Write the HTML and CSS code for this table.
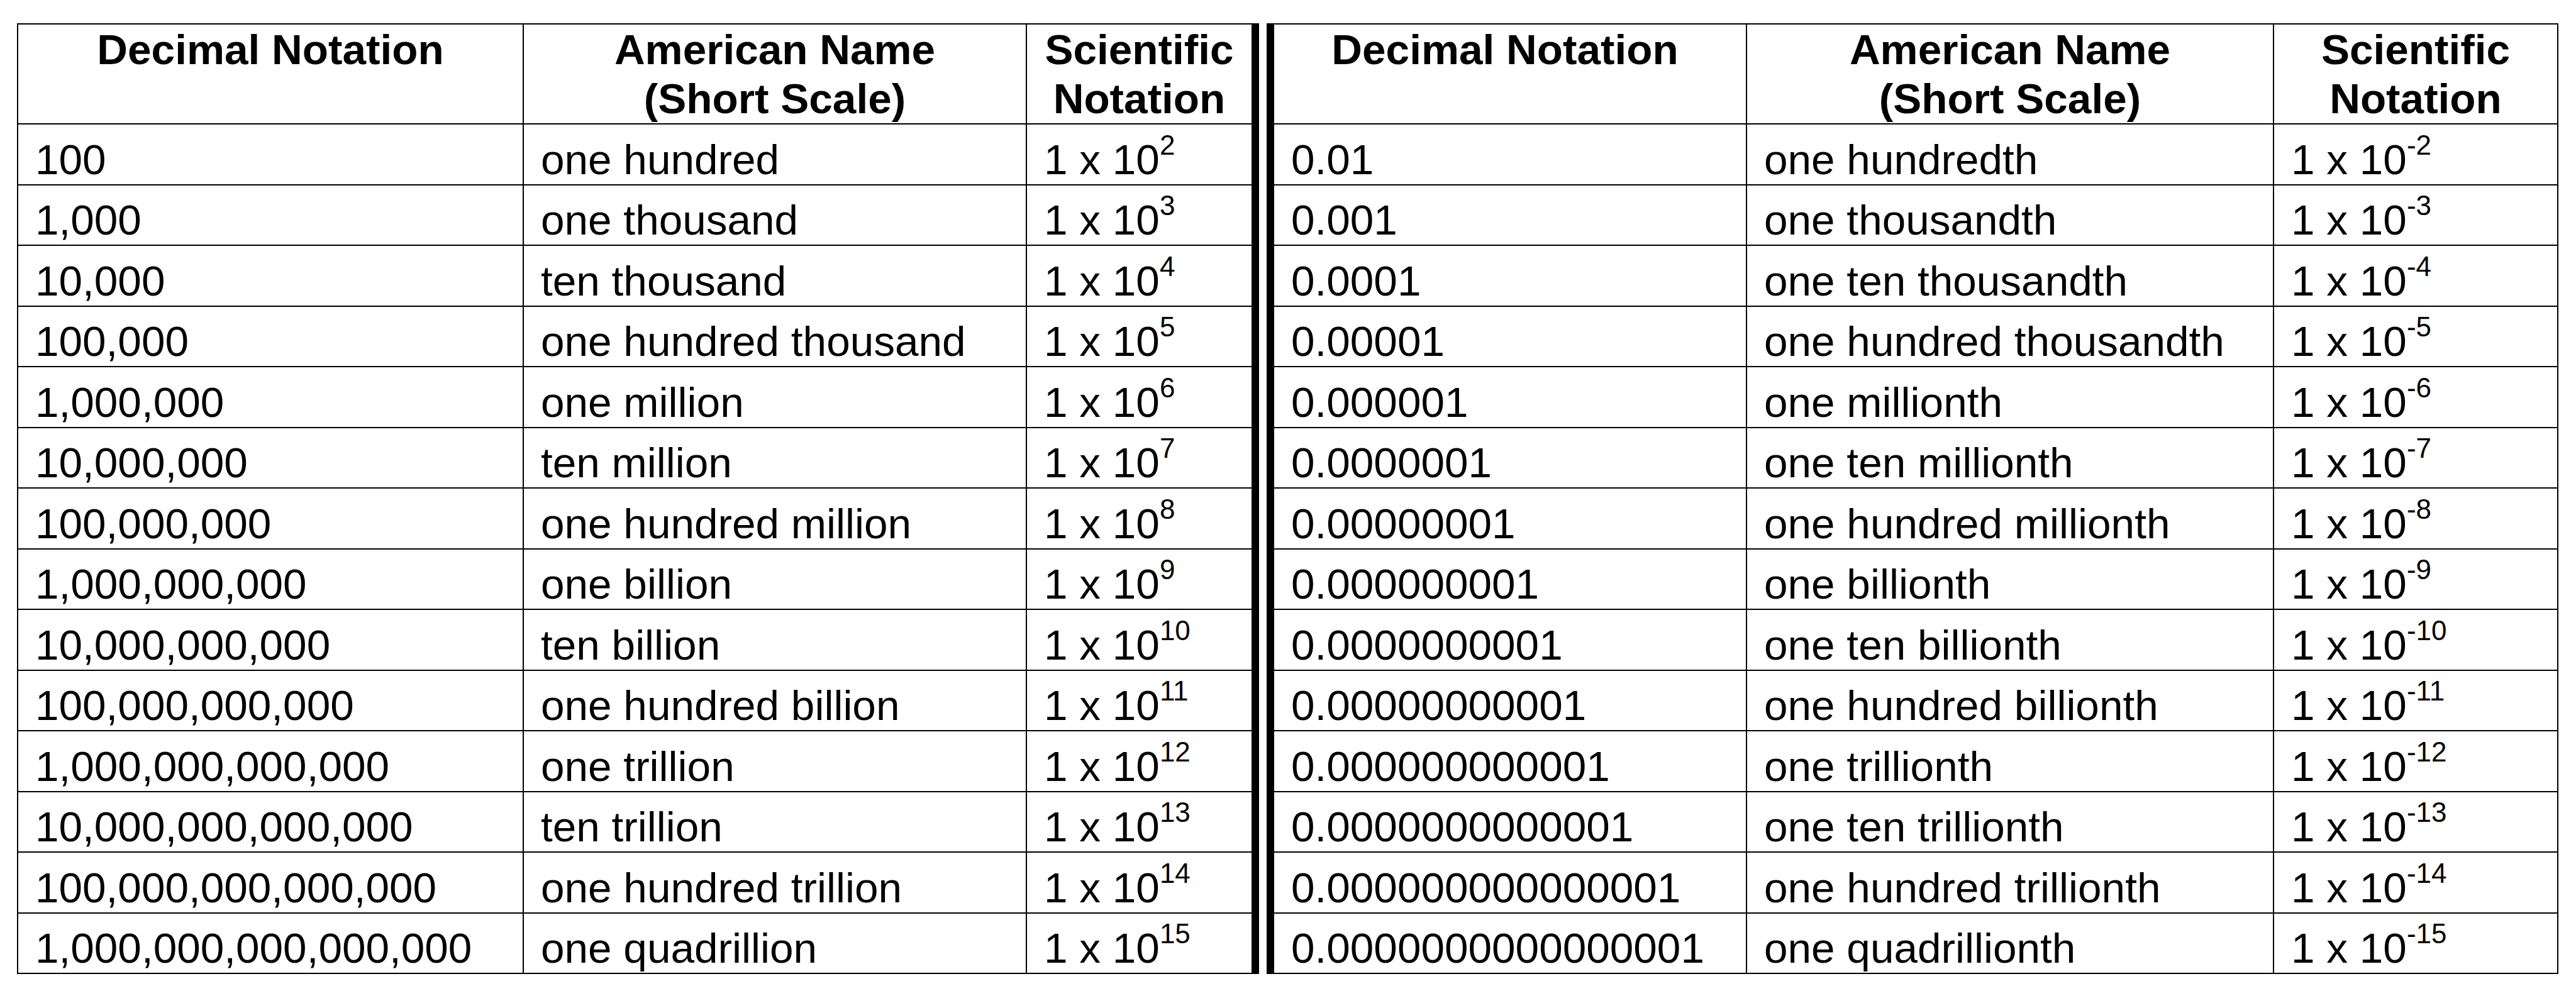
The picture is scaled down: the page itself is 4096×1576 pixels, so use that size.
FILE: index.html
```html
<!DOCTYPE html>
<html lang="en">
<head>
<meta charset="utf-8">
<title>Decimal, American Name and Scientific Notation</title>
<link rel="stylesheet" href="styles.css">
</head>
<body>
<main class="page">
<table class="notation">
  <colgroup>
    <col class="c-dec">
    <col class="c-name">
    <col class="c-sci">
    <col class="c-dec2">
    <col class="c-name2">
    <col class="c-sci2">
  </colgroup>
  <thead>
    <tr class="head-row">
      <th>Decimal Notation</th>
      <th>American Name<br>(Short Scale)</th>
      <th class="split">Scientific<br>Notation</th>
      <th class="after-split">Decimal Notation</th>
      <th>American Name<br>(Short Scale)</th>
      <th>Scientific<br>Notation</th>
    </tr>
  </thead>
  <tbody>
    <tr><td>100</td><td>one hundred</td><td class="split">1 x 10<sup class="exp">2</sup></td><td>0.01</td><td>one hundredth</td><td>1 x 10<sup class="exp">-2</sup></td></tr>
    <tr><td>1,000</td><td>one thousand</td><td class="split">1 x 10<sup class="exp">3</sup></td><td>0.001</td><td>one thousandth</td><td>1 x 10<sup class="exp">-3</sup></td></tr>
    <tr><td>10,000</td><td>ten thousand</td><td class="split">1 x 10<sup class="exp">4</sup></td><td>0.0001</td><td>one ten thousandth</td><td>1 x 10<sup class="exp">-4</sup></td></tr>
    <tr><td>100,000</td><td>one hundred thousand</td><td class="split">1 x 10<sup class="exp">5</sup></td><td>0.00001</td><td>one hundred thousandth</td><td>1 x 10<sup class="exp">-5</sup></td></tr>
    <tr><td>1,000,000</td><td>one million</td><td class="split">1 x 10<sup class="exp">6</sup></td><td>0.000001</td><td>one millionth</td><td>1 x 10<sup class="exp">-6</sup></td></tr>
    <tr><td>10,000,000</td><td>ten million</td><td class="split">1 x 10<sup class="exp">7</sup></td><td>0.0000001</td><td>one ten millionth</td><td>1 x 10<sup class="exp">-7</sup></td></tr>
    <tr><td>100,000,000</td><td>one hundred million</td><td class="split">1 x 10<sup class="exp">8</sup></td><td>0.00000001</td><td>one hundred millionth</td><td>1 x 10<sup class="exp">-8</sup></td></tr>
    <tr><td>1,000,000,000</td><td>one billion</td><td class="split">1 x 10<sup class="exp">9</sup></td><td>0.000000001</td><td>one billionth</td><td>1 x 10<sup class="exp">-9</sup></td></tr>
    <tr><td>10,000,000,000</td><td>ten billion</td><td class="split">1 x 10<sup class="exp">10</sup></td><td>0.0000000001</td><td>one ten billionth</td><td>1 x 10<sup class="exp">-10</sup></td></tr>
    <tr><td>100,000,000,000</td><td>one hundred billion</td><td class="split">1 x 10<sup class="exp">11</sup></td><td>0.00000000001</td><td>one hundred billionth</td><td>1 x 10<sup class="exp">-11</sup></td></tr>
    <tr><td>1,000,000,000,000</td><td>one trillion</td><td class="split">1 x 10<sup class="exp">12</sup></td><td>0.000000000001</td><td>one trillionth</td><td>1 x 10<sup class="exp">-12</sup></td></tr>
    <tr><td>10,000,000,000,000</td><td>ten trillion</td><td class="split">1 x 10<sup class="exp">13</sup></td><td>0.0000000000001</td><td>one ten trillionth</td><td>1 x 10<sup class="exp">-13</sup></td></tr>
    <tr><td>100,000,000,000,000</td><td>one hundred trillion</td><td class="split">1 x 10<sup class="exp">14</sup></td><td>0.000000000000001</td><td>one hundred trillionth</td><td>1 x 10<sup class="exp">-14</sup></td></tr>
    <tr><td>1,000,000,000,000,000</td><td>one quadrillion</td><td class="split">1 x 10<sup class="exp">15</sup></td><td>0.0000000000000001</td><td>one quadrillionth</td><td>1 x 10<sup class="exp">-15</sup></td></tr>
  </tbody>
</table>
</main>
</body>
</html>
```

FILE: styles.css
```css
html, body {
  margin: 0;
  padding: 0;
  background: #ffffff;
}

body {
  font-family: "Liberation Sans", Arial, sans-serif;
  color: #000000;
}

.page {
  padding: 37px 0 0 27px;
}

.notation {
  border-collapse: collapse;
  table-layout: fixed;
  width: 4039px;
  font-size: 67.5px;
  line-height: 78px;
}

.c-dec { width: 804px; }
.c-name { width: 800px; }
.c-sci { width: 376px; }
.c-dec2 { width: 769px; }
.c-name2 { width: 838px; }
.c-sci2 { width: 452px; }

.notation th,
.notation td {
  border: 2px solid #000000;
  white-space: nowrap;
  overflow: visible;
}

.notation th {
  font-weight: bold;
  text-align: center;
  vertical-align: top;
  padding: 1px 0 0 0;
}

.notation th.after-split {
  padding-right: 16px;
}

.notation td {
  text-align: left;
  vertical-align: bottom;
  padding: 0 6px 0 27px;
}

.head-row {
  height: 159px;
}

.notation tbody tr {
  height: 96.5px;
}

.notation .split {
  border-right: 36px double #000000;
}

.exp {
  font-size: 44px;
  line-height: 0;
  vertical-align: 31px;
}
```
